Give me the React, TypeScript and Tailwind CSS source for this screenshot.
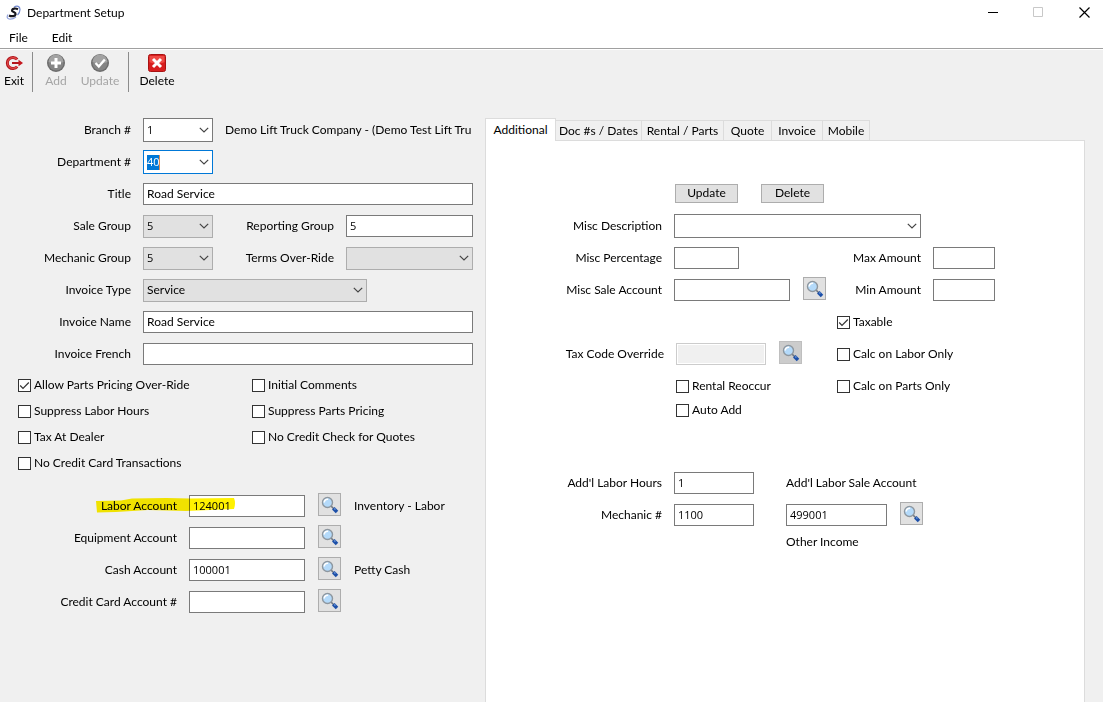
import { useId, useState, type ReactNode } from "react";
import clsx from "clsx";

const tabs = [
  { label: "Additional", width: "w-[71px]" },
  { label: "Doc #s / Dates", width: "w-[86px]" },
  { label: "Rental / Parts", width: "w-[82px]" },
  { label: "Quote", width: "w-12" },
  { label: "Invoice", width: "w-[51px]" },
  { label: "Mobile", width: "w-[47px]" },
];

/* ---------- Icons ---------- */

function AppIcon() {
  return (
    <svg width="16" height="16" viewBox="0 0 16 16" fill="none">
      <path d="M8 2.200C11 .3 14 1.300 14 4.500c0 2-1 4-2.500 5.500" stroke="#6f86cf" strokeWidth="1.200" />
      <path d="M2 9.500c-1.500 2-1 4 1 4.500 2.500.5 5-.5 7-2" stroke="#8fa0dc" strokeWidth="1.200" />
      <path d="M12 4.200C9.500 3 6.500 3.300 6 5.200c-.5 2 4 1.800 3.600 4C9.200 11.500 5.500 11.700 3 10.400" stroke="#17171f" strokeWidth="2.200" />
    </svg>
  );
}

function ExitIcon() {
  return (
    <svg width="20" height="20" viewBox="0 0 20 20" fill="none">
      <path d="M13.200 6.400A5.600 5.600 0 1 0 13.200 13.600" stroke="#b3161c" strokeWidth="3" />
      <path d="M13 6.500A5.400 5.400 0 1 0 13 13.500" stroke="#e04b4b" strokeWidth="1.200" />
      <path d="M8 10h8" stroke="#b3161c" strokeWidth="2" />
      <path d="M14.500 6.800 19 10l-4.500 3.200z" fill="#c5181f" />
    </svg>
  );
}

function RoundIcon({ children }: { children: ReactNode }) {
  return (
    <svg width="20" height="20" viewBox="0 0 20 20" fill="none">
      <circle cx="10" cy="10" r="9" fill="#6d6d6d" />
      <circle cx="10" cy="10" r="7.500" fill="#858585" />
      <path d="M2.500 9a7.500 7.500 0 0 1 15 0c-4 1.800-11 1.800-15 0z" fill="#a3a3a3" />
      {children}
    </svg>
  );
}

function DeleteIcon() {
  return (
    <svg width="20" height="20" viewBox="0 0 20 20" fill="none">
      <rect x="1.500" y="1.500" width="17" height="17" rx="2" fill="#d81e1e" stroke="#a81212" />
      <path d="M2.500 3h15v6c-4 2-11 2-15 0z" fill="#ee4a45" />
      <path d="m6 6 8 8M14 6l-8 8" stroke="#fff" strokeWidth="3" />
    </svg>
  );
}

function SearchIcon() {
  return (
    <svg width="18" height="18" viewBox="0 0 18 18" fill="none">
      <path d="m10 10 3 3" stroke="#6b7480" strokeWidth="1.600" />
      <path d="m12.300 12.300 3.700 3.700" stroke="#1c4fa8" strokeWidth="3.600" />
      <path d="m13.400 12.500 1 1" stroke="#7fa8e6" strokeWidth="1.200" />
      <circle cx="6.500" cy="6.500" r="5" fill="#b4dafa" stroke="#8e979f" strokeWidth="1.400" />
      <path d="M3.200 6.500a3.400 3.400 0 0 1 4-3.200" stroke="#fff" strokeWidth="1.600" />
    </svg>
  );
}

/* ---------- Controls ---------- */

function Field({ label, labelWidth, children }: { label: string; labelWidth: string; children: (id: string) => ReactNode }) {
  const id = useId();
  return (
    <div className="flex h-8 items-center gap-3">
      <label htmlFor={id} className={clsx("shrink-0 whitespace-nowrap text-right", labelWidth)}>
        {label}
      </label>
      {children(id)}
    </div>
  );
}

function TextBox({ id, value = "", width, disabled }: { id: string; value?: string; width: string; disabled?: boolean }) {
  return (
    <input
      id={id}
      type="text"
      defaultValue={value}
      disabled={disabled}
      className={clsx(
        "h-[22px] border px-[3px] pb-0.5 outline-none",
        disabled ? "border-[#cccccc] bg-[#f0f0f0] shadow-[inset_0_0_0_1px_#fff]" : "border-[#7a7a7a] bg-white",
        /^\d/.test(value) && "font-['Open_Sans',sans-serif] text-[11px]",
        width
      )}
    />
  );
}

function Combo({ id, value = "", width, kind = "list" }: { id: string; value?: string; width: string; kind?: "list" | "edit" | "focused" }) {
  return (
    <div className={clsx("grid items-center", width)}>
      <select
        id={id}
        defaultValue={value}
        className={clsx(
          "col-start-1 row-start-1 w-full appearance-none border px-[3px] outline-none",
          kind === "list" && "h-[23px] border-[#adadad] bg-[#e1e1e1]",
          kind === "edit" && "h-6 border-[#7a7a7a] bg-white",
          kind === "focused" &&
            "h-6 border-[#0078d7] bg-white bg-[linear-gradient(90deg,#0078d7_12px,#e08a50_12px)] bg-[length:13px_15px] bg-[position:3px_center] bg-no-repeat text-white",
          /^\d/.test(value) && "font-['Open_Sans',sans-serif] text-[11px]"
        )}
      >
        <option>{value}</option>
      </select>
      <svg className="pointer-events-none col-start-1 row-start-1 mr-1 justify-self-end" width="10" height="6" viewBox="0 0 10 6" fill="none">
        <path d="m.8.800 4.200 4.200L9.200.800" stroke="#444" strokeWidth="1.200" />
      </svg>
    </div>
  );
}

function Check({ label, checked, className }: { label: string; checked?: boolean; className?: string }) {
  return (
    <label className={clsx("flex items-center gap-[3px] whitespace-nowrap", className)}>
      <span className="grid size-[13px] shrink-0 place-items-center">
        <input
          type="checkbox"
          defaultChecked={checked}
          className="peer col-start-1 row-start-1 size-[13px] appearance-none border border-[#333] bg-white"
        />
        <svg className="pointer-events-none invisible col-start-1 row-start-1 peer-checked:visible" width="11" height="11" viewBox="0 0 11 11" fill="none">
          <path d="m1.200 5.500 2.800 2.800 5.800-5.800" stroke="#333" strokeWidth="1.200" />
        </svg>
      </span>
      {label}
    </label>
  );
}

function Lookup({ label, dim }: { label: string; dim?: boolean }) {
  return (
    <button
      type="button"
      aria-label={label}
      className={clsx(
        "mb-[3px] grid size-[23px] shrink-0 place-items-center border",
        dim ? "border-[#bfbfbf] bg-[#cccccc]" : "border-[#adadad] bg-[#e1e1e1]"
      )}
    >
      <SearchIcon />
    </button>
  );
}

function ToolButton({ label, width, disabled, children }: { label: string; width: string; disabled?: boolean; children: ReactNode }) {
  return (
    <button type="button" disabled={disabled} className={clsx("flex flex-col items-center pt-px disabled:text-[#a5a5a5]", width)}>
      {children}
      <span className="leading-4">{label}</span>
    </button>
  );
}

/* ---------- Sections ---------- */

function TitleBar() {
  return (
    <header className="border-b border-[#a0a0a0] bg-white">
      <div className="flex h-[26px] items-center pl-1.5">
        <AppIcon />
        <h1 className="ml-[5px] flex-1">Department Setup</h1>
        <div className="flex h-6 self-start">
          <button type="button" aria-label="Minimize" className="grid w-[45px] place-items-center">
            <svg width="11" height="11" viewBox="0 0 11 11">
              <path d="M0 5.500h10" stroke="#000" />
            </svg>
          </button>
          <button type="button" aria-label="Maximize" disabled className="grid w-[45px] place-items-center">
            <svg width="11" height="11" viewBox="0 0 11 11" fill="none">
              <path d="M.5.500h9v9h-9z" stroke="#c8c8c8" />
            </svg>
          </button>
          <button type="button" aria-label="Close" className="grid w-[42px] place-items-center pl-1">
            <svg width="11" height="11" viewBox="0 0 11 11">
              <path d="m.5.500 10 10M10.500.500l-10 10" stroke="#000" strokeWidth="1.200" />
            </svg>
          </button>
        </div>
      </div>
      <nav className="flex h-[22px] items-center gap-6 pb-px pl-[9px] pt-0.5">
        <button type="button">File</button>
        <button type="button">Edit</button>
      </nav>
    </header>
  );
}

function Toolbar() {
  return (
    <div className="flex h-[49px] items-start border-t border-white pt-0.5">
      <ToolButton label="Exit" width="w-7">
        <ExitIcon />
      </ToolButton>
      <div className="ml-1 h-10 w-px bg-[#8c8c8c]" />
      <ToolButton label="Add" width="ml-px w-11" disabled>
        <RoundIcon>
          <path d="M10 5v10M5 10h10" stroke="#fff" strokeWidth="3" />
        </RoundIcon>
      </ToolButton>
      <ToolButton label="Update" width="w-11" disabled>
        <RoundIcon>
          <path d="m5.500 10 3.300 3.500 6-7" stroke="#fff" strokeWidth="2.400" />
        </RoundIcon>
      </ToolButton>
      <div className="ml-1.5 h-10 w-px bg-[#8c8c8c]" />
      <ToolButton label="Delete" width="w-14">
        <DeleteIcon />
      </ToolButton>
    </div>
  );
}

function DepartmentForm() {
  return (
    <form className="w-[485px] shrink-0 pt-4">
      <div className="flex items-center gap-3 pr-3">
        <Field label="Branch #" labelWidth="w-[131px]">
          {(id) => <Combo id={id} value="1" width="w-[70px]" kind="edit" />}
        </Field>
        <span className="whitespace-nowrap">Demo Lift Truck Company - (Demo Test Lift Tru</span>
      </div>
      <Field label="Department #" labelWidth="w-[131px]">
        {(id) => <Combo id={id} value="40" width="w-[70px]" kind="focused" />}
      </Field>
      <Field label="Title" labelWidth="w-[131px]">
        {(id) => <TextBox id={id} value="Road Service" width="w-[330px]" />}
      </Field>
      <div className="flex">
        <Field label="Sale Group" labelWidth="w-[131px]">
          {(id) => <Combo id={id} value="5" width="w-[70px]" />}
        </Field>
        <Field label="Reporting Group" labelWidth="w-[121px]">
          {(id) => <TextBox id={id} value="5" width="w-[127px]" />}
        </Field>
      </div>
      <div className="flex">
        <Field label="Mechanic Group" labelWidth="w-[131px]">
          {(id) => <Combo id={id} value="5" width="w-[70px]" />}
        </Field>
        <Field label="Terms Over-Ride" labelWidth="w-[121px]">
          {(id) => <Combo id={id} width="w-[127px]" />}
        </Field>
      </div>
      <Field label="Invoice Type" labelWidth="w-[131px]">
        {(id) => <Combo id={id} value="Service" width="w-[224px]" />}
      </Field>
      <Field label="Invoice Name" labelWidth="w-[131px]">
        {(id) => <TextBox id={id} value="Road Service" width="w-[330px]" />}
      </Field>
      <Field label="Invoice French" labelWidth="w-[131px]">
        {(id) => <TextBox id={id} width="w-[330px]" />}
      </Field>

      <div className="mt-0.5 grid auto-rows-[26px] grid-cols-[234px_1fr] pl-[18px]">
        <Check label="Allow Parts Pricing Over-Ride" checked />
        <Check label="Initial Comments" />
        <Check label="Suppress Labor Hours" />
        <Check label="Suppress Parts Pricing" />
        <Check label="Tax At Dealer" />
        <Check label="No Credit Check for Quotes" />
        <Check label="No Credit Card Transactions" />
      </div>

      <div className="relative mt-3.5">
        <Account label="Labor Account" value="124001" note="Inventory - Labor" />
        <Account label="Equipment Account" />
        <Account label="Cash Account" value="100001" note="Petty Cash" />
        <Account label="Credit Card Account #" />
        {/* highlighter stroke over the labor account */}
        <svg className="pointer-events-none absolute left-24 top-2 mix-blend-multiply" width="140" height="16" viewBox="0 0 140 16">
          <path d="M0 3 25 2.500 36 .5 70 0l24 .5L138 0q2 5 0 11l-48 2-38-1-32 2-19 .5z" fill="#fff100" />
        </svg>
      </div>
    </form>
  );
}

function Account({ label, value, note }: { label: string; value?: string; note?: string }) {
  return (
    <div className="flex items-center gap-[13px]">
      <Field label={label} labelWidth="w-[177px]">
        {(id) => <TextBox id={id} value={value} width="w-[116px]" />}
      </Field>
      <Lookup label={`Find ${label}`} />
      {note && <span>{note}</span>}
    </div>
  );
}

function AdditionalPanel() {
  return (
    <div className="flex-1 border border-b-0 border-[#dcdcdc] bg-white pt-9">
      <div className="mb-px flex h-8 items-center gap-[23px] pl-[189px]">
        <button type="button" className="h-[19px] w-[63px] border border-[#adadad] bg-[#e1e1e1] leading-4">
          Update
        </button>
        <button type="button" className="h-[19px] w-[63px] border border-[#adadad] bg-[#e1e1e1] leading-4">
          Delete
        </button>
      </div>
      <Field label="Misc Description" labelWidth="w-44">
        {(id) => <Combo id={id} width="w-[247px]" kind="edit" />}
      </Field>
      <div className="grid grid-cols-[351px_1fr]">
        <Field label="Misc Percentage" labelWidth="w-44">
          {(id) => <TextBox id={id} width="w-[65px]" />}
        </Field>
        <Field label="Max Amount" labelWidth="w-[84px]">
          {(id) => <TextBox id={id} width="w-[62px]" />}
        </Field>
        <div className="flex items-center gap-[13px]">
          <Field label="Misc Sale Account" labelWidth="w-44">
            {(id) => <TextBox id={id} width="w-[116px]" />}
          </Field>
          <Lookup label="Find Misc Sale Account" />
        </div>
        <Field label="Min Amount" labelWidth="w-[84px]">
          {(id) => <TextBox id={id} width="w-[62px]" />}
        </Field>
        <Check label="Taxable" checked className="col-start-2 h-8" />
        <div className="flex items-center gap-[13px]">
          <Field label="Tax Code Override" labelWidth="w-[178px]">
            {(id) => <TextBox id={id} width="w-[90px]" disabled />}
          </Field>
          <Lookup label="Find Tax Code" dim />
        </div>
        <Check label="Calc on Labor Only" />
        <Check label="Rental Reoccur" className="h-8 pl-[190px]" />
        <Check label="Calc on Parts Only" />
        <Check label="Auto Add" className="h-4 pl-[190px]" />
      </div>
      <div className="mt-[49px] grid grid-cols-[300px_1fr] items-center">
        <Field label="Add'l Labor Hours" labelWidth="w-44">
          {(id) => <TextBox id={id} value="1" width="w-20" />}
        </Field>
        <label htmlFor="labor-sale">Add'l Labor Sale Account</label>
        <Field label="Mechanic #" labelWidth="w-44">
          {(id) => <TextBox id={id} value="1100" width="w-20" />}
        </Field>
        <div className="flex items-center gap-[13px]">
          <TextBox id="labor-sale" value="499001" width="w-[101px]" />
          <Lookup label="Find Labor Sale Account" />
        </div>
        <span className="col-start-2 leading-[22px]">Other Income</span>
      </div>
    </div>
  );
}

export default function App() {
  const [active, setActive] = useState("Additional");

  return (
    <div className="flex min-h-screen flex-col bg-[#f0f0f0] font-[Lato,'Open_Sans',sans-serif] text-xs text-black">
      <TitleBar />
      <Toolbar />
      <main className="flex flex-1">
        <DepartmentForm />
        <section className="mr-[18px] flex flex-1 flex-col pt-5">
          <div role="tablist" className="flex h-[22px] items-end">
            {tabs.map((tab) => (
              <button
                key={tab.label}
                type="button"
                role="tab"
                aria-selected={active === tab.label}
                onClick={() => setActive(tab.label)}
                className={clsx(
                  "whitespace-nowrap border-[#dcdcdc]",
                  tab.width,
                  active === tab.label ? "z-10 -mb-px h-[23px] border border-b-0 bg-white" : "h-5 border-r border-t"
                )}
              >
                {tab.label}
              </button>
            ))}
          </div>
          <AdditionalPanel />
        </section>
      </main>
    </div>
  );
}
